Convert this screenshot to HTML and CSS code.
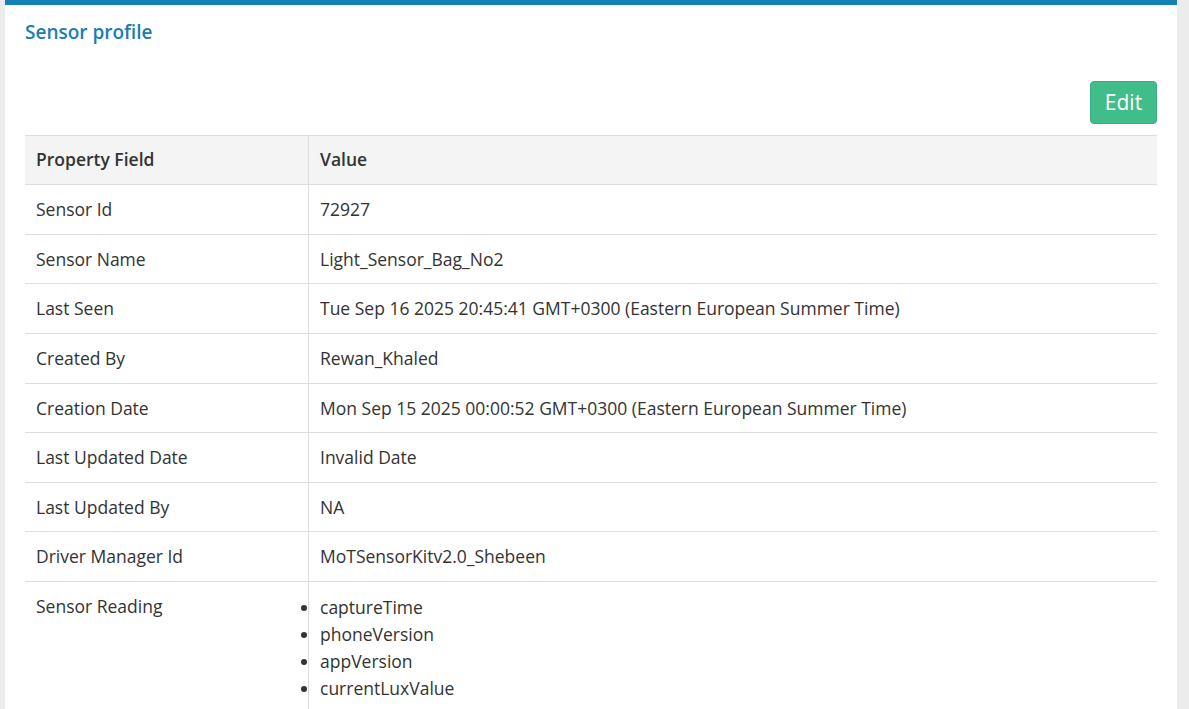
FILE: index.html
```html
<!DOCTYPE html>
<html>
<head>
<meta charset="utf-8">
<link rel="stylesheet" href="styles.css">
</head>
<body>
<div class="page">
  <div class="card">
    <h3 class="card-title">Sensor profile</h3>
    <div class="actions">
      <button class="btn-edit">Edit</button>
    </div>
    <table class="profile">
      <thead>
        <tr><th class="col-field">Property Field</th><th>Value</th></tr>
      </thead>
      <tbody>
        <tr><td>Sensor Id</td><td>72927</td></tr>
        <tr><td>Sensor Name</td><td>Light_Sensor_Bag_No2</td></tr>
        <tr><td>Last Seen</td><td>Tue Sep 16 2025 20:45:41 GMT+0300 (Eastern European Summer Time)</td></tr>
        <tr><td>Created By</td><td>Rewan_Khaled</td></tr>
        <tr><td>Creation Date</td><td>Mon Sep 15 2025 00:00:52 GMT+0300 (Eastern European Summer Time)</td></tr>
        <tr><td>Last Updated Date</td><td>Invalid Date</td></tr>
        <tr><td>Last Updated By</td><td>NA</td></tr>
        <tr><td>Driver Manager Id</td><td>MoTSensorKitv2.0_Shebeen</td></tr>
        <tr>
          <td>Sensor Reading</td>
          <td>
            <ul class="readings">
              <li>captureTime</li>
              <li>phoneVersion</li>
              <li>appVersion</li>
              <li>currentLuxValue</li>
            </ul>
          </td>
        </tr>
      </tbody>
    </table>
  </div>
</div>
</body>
</html>
```
FILE: styles.css
```css
html, body {
  margin: 0;
  padding: 0;
  background: #ececec;
  font-family: "Open Sans", "Liberation Sans", sans-serif;
  color: #333;
}
.page {
  padding: 0 12px 0 5px;
}
.card {
  background: #fff;
  border-top: 5px solid #1580b8;
  padding: 13px 20px 40px 20px;
  min-height: 700px;
}
.card-title {
  margin: 0;
  font-size: 19px;
  font-weight: 600;
  color: #1a7db5;
  line-height: 28px;
}
.actions {
  display: flex;
  justify-content: flex-end;
  margin-top: 35px;
  margin-bottom: 11px;
}
.btn-edit {
  font-family: "Open Sans", "Liberation Sans", sans-serif;
  font-size: 21px;
  color: #fff;
  background: #41bd8a;
  border: 1px solid #38ad7d;
  border-radius: 4px;
  width: 67px;
  height: 43px;
  padding: 0;
  line-height: 41px;
}
.profile {
  width: 100%;
  border-collapse: collapse;
  font-size: 17.5px;
}
.profile th, .profile td {
  text-align: left;
  vertical-align: top;
  padding: 12px 11px 12px 11px;
  line-height: 24.6px;
  border-top: 1px solid #dedede;
}
.profile thead th {
  background: #f4f4f4;
  font-weight: 600;
  color: #333;
  padding-top: 11.4px;
  padding-bottom: 12.2px;
  border-bottom: 1px solid #dedede;
}
.profile th + th, .profile td + td {
  border-left: 1px solid #dedede;
}
.col-field {
  width: 261px;
}
.readings {
  margin: 0;
  padding: 0;
  list-style: disc outside;
}
.readings li {
  line-height: 27px;
}
```
